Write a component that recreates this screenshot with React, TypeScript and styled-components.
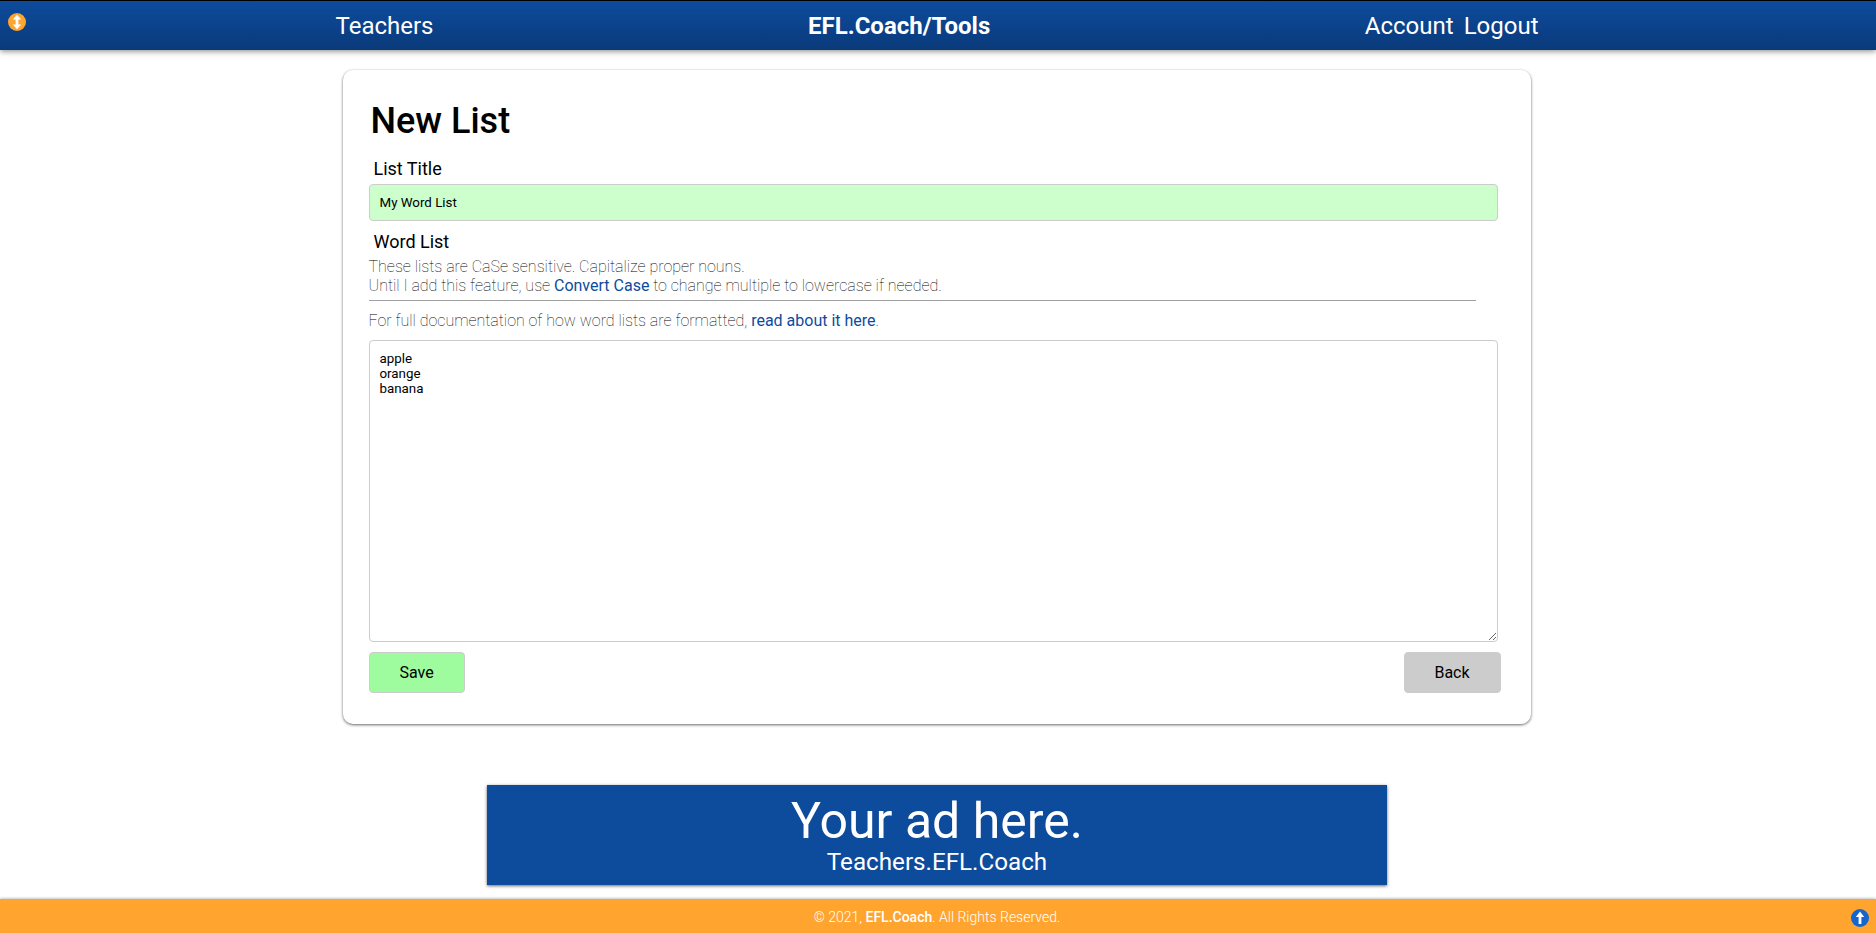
import React from "react";
import styled, { createGlobalStyle } from "styled-components";

const GlobalStyle = createGlobalStyle`
  * { box-sizing: border-box; }
  body {
    margin: 0;
    background: #fff;
    color: #000;
    font-family: Roboto, "Liberation Sans", sans-serif;
    font-size: 16px;
    overflow: hidden;
  }
`;

const Page = styled.div`
  display: flex;
  flex-direction: column;
  align-items: center;
  height: 933px;
`;

const Header = styled.header`
  position: relative;
  flex: none;
  width: 100%;
  height: 50px;
  padding: 0 337.5px 0 335.5px;
  display: flex;
  justify-content: space-between;
  align-items: center;
  border-top: 1px solid #000;
  background: linear-gradient(#0d4b9d, #0a3a7a);
  box-shadow: 0 1px 6px rgba(0, 0, 0, 0.5);
  color: #fff;
  font-size: 24px;
`;

const Toggle = styled.span`
  position: absolute;
  left: 8px;
  top: 12px;
  display: flex;
`;

const NavGroup = styled.nav`
  display: flex;
  gap: 10px;
`;

const NavLink = styled.a`
  color: #fff;
`;

const Brand = styled.strong`
  font-weight: 700;
`;

const Card = styled.main`
  flex: none;
  width: 1188px;
  height: 654px;
  margin: 20px 3px 0 0;
  padding: 31px 30px 31px 26px;
  border-radius: 10px;
  background: #fff;
  box-shadow: 0 1px 3px rgba(0, 0, 0, 0.6);
  display: flex;
  flex-direction: column;
`;

const Title = styled.h1`
  margin: 0 0 0 2px;
  height: 40px;
  line-height: 40px;
  font-size: 36px;
  font-weight: 500;
`;

const Label = styled.label`
  height: 21px;
  line-height: 21px;
  margin: 17px 0 5px 5px;
  font-size: 18px;
`;

const WordLabel = styled(Label)`
  margin: 10px 0 5px 5px;
`;

const TitleInput = styled.input`
  width: 1129px;
  height: 37px;
  padding: 0 10px;
  border: 1px solid #ccc;
  border-radius: 4px;
  outline: none;
  background: #cfc;
  color: #000;
  font: 13.333px Roboto, sans-serif;
`;

const Hint = styled.p`
  margin: 0;
  line-height: 19px;
  font-weight: 100;
  color: #000;
`;

const HintLink = styled.a`
  color: #0d4b9d;
  font-weight: 400;
`;

const Divider = styled.hr`
  width: 1107px;
  height: 1px;
  margin: 5px 0 10px;
  border: 0;
  background: #a0a0a0;
`;

const WordArea = styled.textarea`
  flex: none;
  width: 1129px;
  height: 302px;
  margin-top: 10px;
  padding: 10px;
  border: 1px solid #ccc;
  border-radius: 4px;
  outline: none;
  background: #fff;
  color: #000;
  font: 13.333px/15px Roboto, sans-serif;
`;

const Actions = styled.div`
  display: flex;
  justify-content: space-between;
  margin-top: 10px;
`;

const Button = styled.button<{ $primary?: boolean }>`
  width: ${(p) => (p.$primary ? 96 : 97)}px;
  height: 41px;
  padding: 0;
  border: 1px solid #ccc;
  border-radius: 4px;
  background: ${(p) => (p.$primary ? "#9efb9e" : "#ccc")};
  color: #000;
  font: 16px Roboto, sans-serif;
`;

const Ad = styled.aside`
  flex: none;
  width: 900px;
  height: 100px;
  margin: 61px 2px 0 0;
  padding-top: 7px;
  background: #0d4b9d;
  box-shadow: 0 1px 3px rgba(0, 0, 0, 0.6);
  color: #fff;
  text-align: center;
`;

const AdHeadline = styled.div`
  font-size: 50px;
  line-height: 59px;
`;

const AdSite = styled.div`
  font-size: 24.2px;
  line-height: 23px;
`;

const Footer = styled.footer`
  position: relative;
  flex: none;
  width: 100%;
  height: 34px;
  margin-top: 14px;
  background: #ffa42f;
  box-shadow: 0 0 3px rgba(0, 0, 0, 0.4);
  color: #fff;
  display: flex;
  align-items: center;
  justify-content: center;
  font-size: 14px;
  font-weight: 300;
  padding: 2px 2px 0 0;

  strong { font-weight: 500; }
`;

const ToTop = styled.span`
  position: absolute;
  right: 7px;
  top: 10px;
  display: flex;
`;

export default function App() {
  return (
    <>
      <GlobalStyle />
      <Page>
        <Header>
          <Toggle>
            <svg width="18" height="18" viewBox="0 0 18 18">
              <circle cx="9" cy="9" r="9" fill="#ffa42f" />
              <path d="M9 1.8 13.2 6.6H10.4V11.4H13.2L9 16.2 4.8 11.4H7.6V6.6H4.8Z" fill="#fff" />
            </svg>
          </Toggle>
          <NavLink>Teachers</NavLink>
          <Brand>EFL.Coach/Tools</Brand>
          <NavGroup>
            <NavLink>Account</NavLink>
            <NavLink>Logout</NavLink>
          </NavGroup>
        </Header>
        <Card>
          <Title>New List</Title>
          <Label htmlFor="title">List Title</Label>
          <TitleInput id="title" defaultValue="My Word List" />
          <WordLabel htmlFor="words">Word List</WordLabel>
          <Hint>
            These lists are CaSe sensitive. Capitalize proper nouns.
            <br />
            Until I add this feature, use <HintLink>Convert Case</HintLink> to change multiple to
            lowercase if needed.
          </Hint>
          <Divider />
          <Hint>
            For full documentation of how word lists are formatted,{" "}
            <HintLink>read about it here</HintLink>.
          </Hint>
          <WordArea id="words" spellCheck={false} defaultValue={"apple\norange\nbanana"} />
          <Actions>
            <Button $primary>Save</Button>
            <Button>Back</Button>
          </Actions>
        </Card>
        <Ad>
          <AdHeadline>Your ad here.</AdHeadline>
          <AdSite>Teachers.EFL.Coach</AdSite>
        </Ad>
        <Footer>
          <span>
            © 2021, <strong>EFL.Coach</strong>. All Rights Reserved.
          </span>
          <ToTop>
            <svg width="18" height="18" viewBox="0 0 18 18">
              <circle cx="9" cy="9" r="9" fill="#1565d0" />
              <path d="M9 2.5 13.2 8H10.4V15H7.6V8H4.8Z" fill="#fff" />
            </svg>
          </ToTop>
        </Footer>
      </Page>
    </>
  );
}
